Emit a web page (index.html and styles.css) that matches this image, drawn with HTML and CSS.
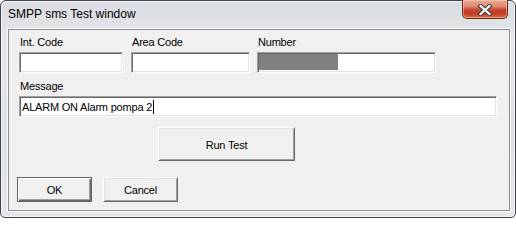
FILE: index.html
```html
<!DOCTYPE html>
<html>
<head>
<meta charset="utf-8">
<title>SMPP sms Test window</title>
<link rel="stylesheet" href="styles.css">
</head>
<body>
<div class="window">
  <div class="titlebar">
    <span class="title">SMPP sms Test window</span>
    <div class="close">
      <svg width="16" height="12" viewBox="0 0 16 12">
        <path d="M3.5 2 L12.5 10 M12.5 2 L3.5 10" stroke="#3a3a3a" stroke-width="4.2" stroke-linecap="square" fill="none"/>
        <path d="M3.5 2 L12.5 10 M12.5 2 L3.5 10" stroke="#ffffff" stroke-width="2.2" stroke-linecap="square" fill="none"/>
      </svg>
    </div>
  </div>
  <div class="client">
    <div class="row fields">
      <div class="field f-int">
        <label class="lbl">Int. Code</label>
        <div class="edit"></div>
      </div>
      <div class="field f-area">
        <label class="lbl">Area Code</label>
        <div class="edit"></div>
      </div>
      <div class="field f-num">
        <label class="lbl">Number</label>
        <div class="edit"><span class="masked"></span></div>
      </div>
    </div>
    <div class="field f-msg">
      <label class="lbl">Message</label>
      <div class="edit msg"><span class="val">ALARM ON Alarm pompa 2</span><span class="caret"></span></div>
    </div>
    <div class="btn run">Run Test</div>
    <div class="row bottom">
      <div class="btn default ok">OK</div>
      <div class="btn cancel">Cancel</div>
    </div>
  </div>
</div>
</body>
</html>
```

FILE: styles.css
```css
html, body {
  margin: 0;
  padding: 0;
  background: #ffffff;
  overflow: hidden;
}

.window {
  box-sizing: border-box;
  width: 516px;
  height: 218px;
  border: 1px solid #3f4347;
  border-radius: 6px 6px 5px 5px;
  background: linear-gradient(180deg, #d9dde1 0%, #e6e8eb 20%, #dfe2e5 60%, #e4e6e9 100%);
  box-shadow: inset 0 0 0 1px #f4f6f8;
  font-family: "Liberation Sans", Arial, sans-serif;
}

.titlebar {
  height: 28px;
  display: flex;
  justify-content: space-between;
  align-items: flex-start;
}

.title {
  padding: 6px 0 0 7px;
  font-size: 12px;
  line-height: 14px;
  color: #000000;
}

.close {
  box-sizing: border-box;
  width: 46px;
  height: 19px;
  margin: -1px 7px 0 0;
  border: 1px solid #6f2418;
  border-top: none;
  border-radius: 0 0 5px 5px;
  background: linear-gradient(180deg, #e9a995 0%, #dd8a74 35%, #c4432a 55%, #c23c24 75%, #d86a48 100%);
  box-shadow: inset 0 0 0 1px rgba(255, 210, 190, 0.55);
  display: flex;
  align-items: center;
  justify-content: center;
}

.close svg {
  display: block;
  margin-top: 1px;
}

.client {
  box-sizing: border-box;
  width: 502px;
  height: 182px;
  margin-left: 7px;
  border: 1px solid #8d9196;
  box-shadow: 0 0 0 1px #f7f8f9;
  background: #f0f0f0;
  padding: 6px 0 0 10px;
  font-size: 11px;
  letter-spacing: -0.2px;
  color: #000000;
}

.row {
  display: flex;
}

.field {
  display: flex;
  flex-direction: column;
}

.lbl {
  display: block;
  height: 16px;
  line-height: 13px;
  padding-left: 1px;
}

.edit {
  box-sizing: border-box;
  height: 21px;
  background: #ffffff;
  border-style: solid;
  border-width: 1px;
  border-color: #a0a0a0 #ffffff #ffffff #a0a0a0;
  box-shadow: inset 1px 1px 0 #696969, inset -1px -1px 0 #e3e3e3;
  padding: 1px 0 0 1px;
}

.f-int { width: 104px; margin-right: 8px; }
.f-area { width: 119px; margin-right: 7px; }
.f-num { width: 179px; }

.masked {
  display: block;
  width: 79px;
  height: 16px;
  background: #808080;
}

.f-msg {
  width: 478px;
  margin-top: 7px;
}

.msg {
  display: flex;
  align-items: center;
  padding: 1px 0 0 2px;
  line-height: 16px;
}

.caret {
  display: inline-block;
  width: 1px;
  height: 14px;
  background: #000000;
  margin-left: 1px;
}

.btn {
  box-sizing: border-box;
  display: flex;
  align-items: center;
  justify-content: center;
  background: #f0f0f0;
  border-style: solid;
  border-width: 1px;
  border-color: #ffffff #696969 #696969 #ffffff;
  box-shadow: inset 1px 1px 0 #e3e3e3, inset -1px -1px 0 #a0a0a0;
  font-size: 11px;
  color: #000000;
}

.run {
  width: 137px;
  height: 34px;
  margin: 10px 0 0 139px;
  padding-top: 1px;
}

.bottom {
  margin-top: 16px;
  margin-left: -2px;
}

.ok, .cancel {
  width: 75px;
  height: 25px;
}

.default {
  border-color: #646464;
  box-shadow: inset 1px 1px 0 #ffffff, inset -1px -1px 0 #696969, inset -2px -2px 0 #a0a0a0;
}

.cancel {
  margin-left: 11px;
}
```
